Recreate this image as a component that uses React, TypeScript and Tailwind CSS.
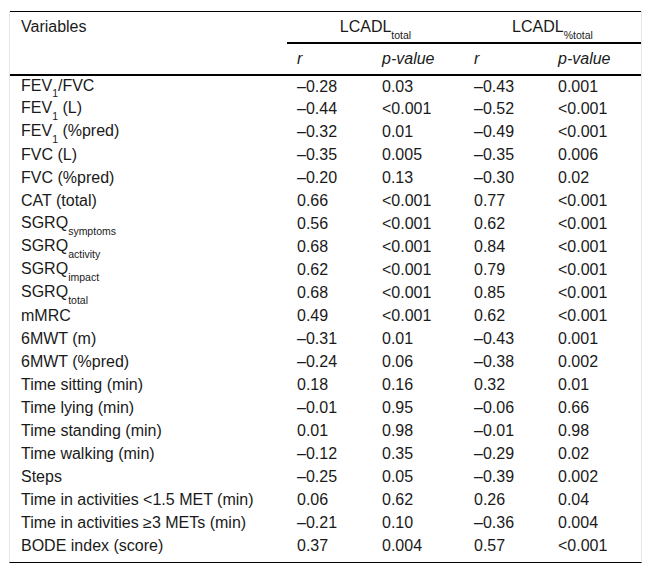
import React from 'react'

type Row = { label: React.ReactNode; r1: string; p1: string; r2: string; p2: string }

const sub = (t: string) => <sub className="text-[10.5px] leading-none align-[-4px]">{t}</sub>

const ROWS: Row[] = [
  { label: <>FEV{sub('1')}/FVC</>, r1: '–0.28', p1: '0.03', r2: '–0.43', p2: '0.001' },
  { label: <>FEV{sub('1')} (L)</>, r1: '–0.44', p1: '<0.001', r2: '–0.52', p2: '<0.001' },
  { label: <>FEV{sub('1')} (%pred)</>, r1: '–0.32', p1: '0.01', r2: '–0.49', p2: '<0.001' },
  { label: 'FVC (L)', r1: '–0.35', p1: '0.005', r2: '–0.35', p2: '0.006' },
  { label: 'FVC (%pred)', r1: '–0.20', p1: '0.13', r2: '–0.30', p2: '0.02' },
  { label: 'CAT (total)', r1: '0.66', p1: '<0.001', r2: '0.77', p2: '<0.001' },
  { label: <>SGRQ{sub('symptoms')}</>, r1: '0.56', p1: '<0.001', r2: '0.62', p2: '<0.001' },
  { label: <>SGRQ{sub('activity')}</>, r1: '0.68', p1: '<0.001', r2: '0.84', p2: '<0.001' },
  { label: <>SGRQ{sub('impact')}</>, r1: '0.62', p1: '<0.001', r2: '0.79', p2: '<0.001' },
  { label: <>SGRQ{sub('total')}</>, r1: '0.68', p1: '<0.001', r2: '0.85', p2: '<0.001' },
  { label: 'mMRC', r1: '0.49', p1: '<0.001', r2: '0.62', p2: '<0.001' },
  { label: '6MWT (m)', r1: '–0.31', p1: '0.01', r2: '–0.43', p2: '0.001' },
  { label: '6MWT (%pred)', r1: '–0.24', p1: '0.06', r2: '–0.38', p2: '0.002' },
  { label: 'Time sitting (min)', r1: '0.18', p1: '0.16', r2: '0.32', p2: '0.01' },
  { label: 'Time lying (min)', r1: '–0.01', p1: '0.95', r2: '–0.06', p2: '0.66' },
  { label: 'Time standing (min)', r1: '0.01', p1: '0.98', r2: '–0.01', p2: '0.98' },
  { label: 'Time walking (min)', r1: '–0.12', p1: '0.35', r2: '–0.29', p2: '0.02' },
  { label: 'Steps', r1: '–0.25', p1: '0.05', r2: '–0.39', p2: '0.002' },
  { label: 'Time in activities <1.5 MET (min)', r1: '0.06', p1: '0.62', r2: '0.26', p2: '0.04' },
  { label: 'Time in activities ≥3 METs (min)', r1: '–0.21', p1: '0.10', r2: '–0.36', p2: '0.004' },
  { label: 'BODE index (score)', r1: '0.37', p1: '0.004', r2: '0.57', p2: '<0.001' },
]

export default function App() {
  return (
    <div className="w-[652px] h-[578px] bg-white pt-[11px] pl-[9px] text-[16px] leading-[18px] text-[#1a1a1a] font-['Liberation_Sans',Arial,sans-serif]">
      <div className="w-[633px] border-x border-[#e6e6e6] pb-[4px] border-b border-b-black">
        <table className="w-full border-collapse table-fixed">
          <colgroup>
            <col className="w-[277px]" />
            <col className="w-[85px]" />
            <col className="w-[92px]" />
            <col className="w-[84px]" />
            <col />
          </colgroup>
          <thead>
            <tr className="border-t border-black">
              <th className="h-[31px] pl-[11px] text-left font-normal align-top pt-[6px]">Variables</th>
              <th colSpan={2} className="text-center font-normal border-b-2 border-black align-top pt-[6px]">
                LCADL{sub('total')}
              </th>
              <th colSpan={2} className="text-center font-normal border-b-2 border-black align-top pt-[6px]">
                LCADL{sub('%total')}
              </th>
            </tr>
            <tr className="border-b-2 border-black">
              <th className="h-[32px]" />
              <th className="pl-[10px] text-left font-normal italic">r</th>
              <th className="pl-[10px] text-left font-normal italic">p-value</th>
              <th className="pl-[10px] text-left font-normal italic">r</th>
              <th className="pl-[10px] text-left font-normal italic">p-value</th>
            </tr>
          </thead>
          <tbody>
            {ROWS.map((r, i) => (
              <tr key={i} className="h-[23px]">
                <td className="pl-[11px] whitespace-nowrap">{r.label}</td>
                <td className="pl-[10px]">{r.r1}</td>
                <td className="pl-[10px]">{r.p1}</td>
                <td className="pl-[10px]">{r.r2}</td>
                <td className="pl-[10px]">{r.p2}</td>
              </tr>
            ))}
          </tbody>
        </table>
      </div>
    </div>
  )
}
